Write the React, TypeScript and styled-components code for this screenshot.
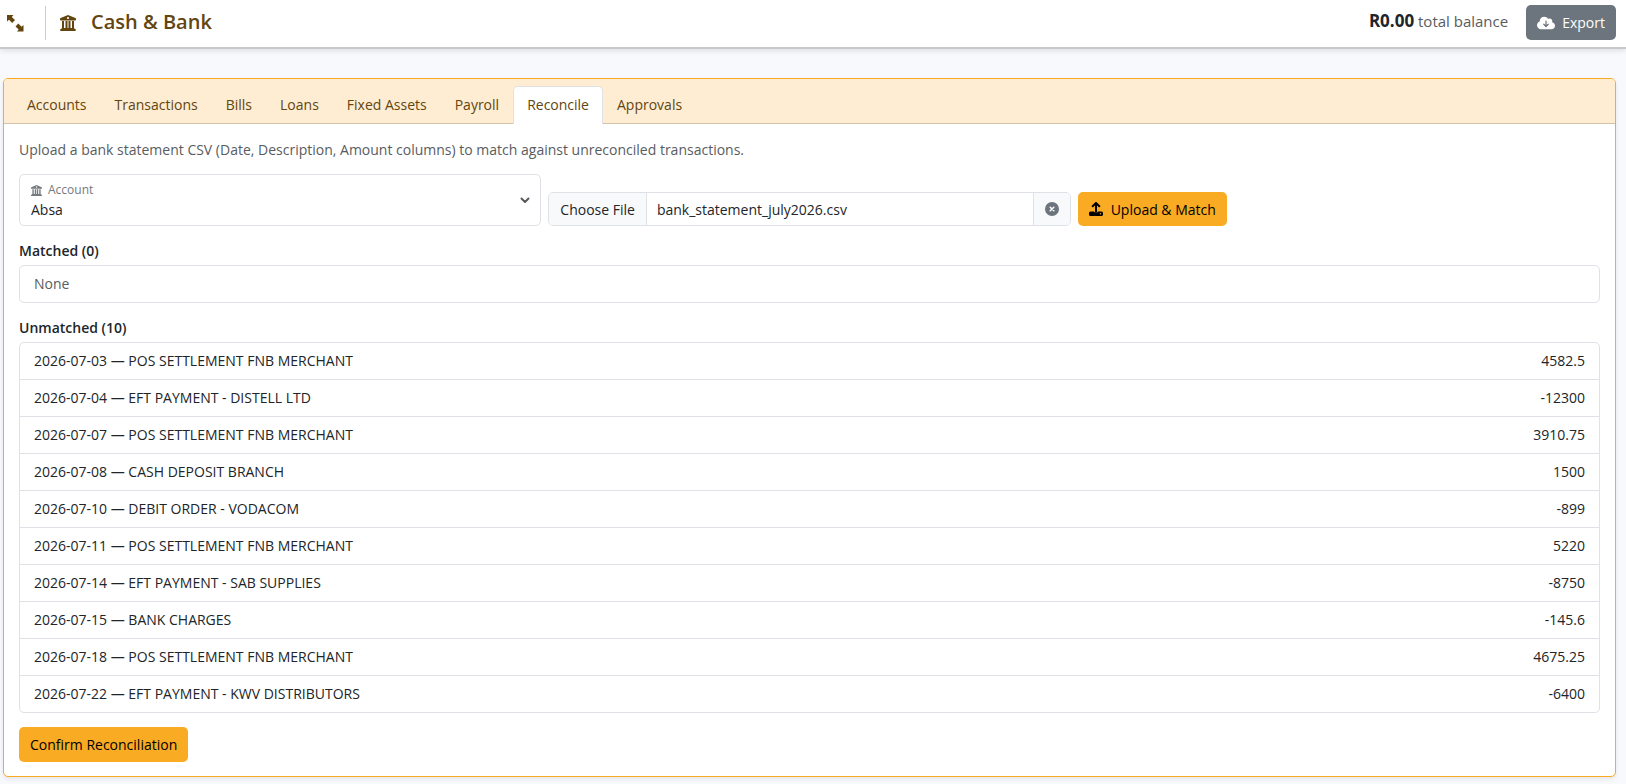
import React, { useState } from 'react';
import styled, { createGlobalStyle, css } from 'styled-components';

const Global = createGlobalStyle`
  *, *::before, *::after { box-sizing: border-box; }
  body {
    margin: 0;
    background: #f8f9fc;
    color: #212529;
    font: 400 14px/21px 'Segoe UI', 'Open Sans', 'Noto Sans', sans-serif;
  }
  button, select, input { font: inherit; color: inherit; }
`;

const TopBar = styled.header`
  display: flex;
  align-items: center;
  justify-content: space-between;
  height: 49px;
  padding: 0 10px 2px 6px;
  background: #fff;
  border-bottom: 2px solid #c8c8c8;
  box-shadow: 0 2px 5px rgba(0, 0, 0, 0.1);
`;

const TitleGroup = styled.div`
  display: flex;
  align-items: center;
  color: #63450f;
`;

const IconButton = styled.button`
  display: flex;
  padding: 0;
  border: 0;
  background: none;
  color: #63450f;
`;

const Divider = styled.span`
  width: 1px;
  height: 34px;
  margin: 0 14px 0 21px;
  background: #d6cab8;
`;

const Title = styled.h1`
  margin: 0 0 0 15px;
  padding-bottom: 2px;
  font-size: 20px;
  line-height: 28px;
  font-weight: 600;
`;

const BalanceGroup = styled.div`
  display: flex;
  align-items: center;
  gap: 18px;
`;

const Balance = styled.p`
  margin: 0;
  padding-bottom: 4px;
  font-size: 15px;
  color: #595c5f;
  strong { font-size: 17px; color: #212529; }
`;

const Button = styled.button<{ $tone: 'brand' | 'neutral' }>`
  display: inline-flex;
  align-items: center;
  height: 35px;
  padding: 0 11px;
  border: 0;
  border-radius: 5px;
  white-space: nowrap;
  cursor: pointer;
  ${p => p.$tone === 'brand'
    ? css`gap: 8px; background: #f9ab23; color: #000;`
    : css`gap: 7px; background: #6c757d; color: #fff;`}
`;

const Card = styled.main`
  margin: 29px 10px 7px 3px;
  border: 1px solid #f9ab23;
  border-radius: 5px;
  background: #fff;
  box-shadow: 0 2px 4px rgba(0, 0, 0, 0.08);
`;

const Tabs = styled.nav`
  display: flex;
  padding: 7px 9px 0;
  border-bottom: 1px solid #d2c2a8;
  border-radius: 4px 4px 0 0;
  background: #feedd3;
`;

const Tab = styled.a<{ $active: boolean }>`
  margin-bottom: -1px;
  padding: 7px 13px 8px;
  border: 1px solid transparent;
  border-bottom: 0;
  border-radius: 5px 5px 0 0;
  color: #63450f;
  line-height: 22px;
  text-decoration: none;
  ${p => p.$active && css`
    border-color: #dee2e6;
    background: #fff;
  `}
`;

const Body = styled.div`
  padding: 15px 15px 14px;
`;

const Hint = styled.p`
  margin: 0 0 14px;
  color: #595c5f;
`;

const UploadRow = styled.form`
  display: grid;
  grid-template-columns: repeat(3, 1fr);
  align-items: end;
  justify-items: start;
  gap: 7px;
  & > ${Button} { height: 34px; }
`;

const SelectField = styled.div`
  display: grid;
  position: relative;
  width: 100%;
  height: 52px;
`;

const SelectLabel = styled.label`
  position: absolute;
  top: 7px;
  left: 12px;
  display: flex;
  align-items: center;
  gap: 6px;
  font-size: 12px;
  line-height: 18px;
  color: #74797e;
  pointer-events: none;
`;

const Select = styled.select`
  width: 100%;
  padding: 18px 12px 0 11px;
  border: 1px solid #dee2e6;
  border-radius: 5px;
  background: #fff;
  appearance: none;
`;

const Chevron = styled.svg`
  position: absolute;
  right: 11px;
  top: 21px;
  pointer-events: none;
`;

const FileGroup = styled.div`
  display: flex;
  width: 100%;
  height: 34px;
  border: 1px solid #dee2e6;
  border-radius: 5px;
  overflow: hidden;
`;

const FilePick = styled.button`
  padding: 0 11px;
  border: 0;
  border-right: 1px solid #dee2e6;
  background: #f8f9fa;
  white-space: nowrap;
`;

const FileName = styled.input`
  flex: 1;
  min-width: 0;
  padding: 0 10px;
  border: 0;
  background: #fff;
`;

const FileClear = styled.button`
  display: flex;
  align-items: center;
  justify-content: center;
  width: 37px;
  padding: 0;
  border: 0;
  border-left: 1px solid #dee2e6;
  background: #f8f9fa;
  color: #6c757d;
`;

const SectionTitle = styled.h2`
  margin: 14px 0 4px;
  font-size: 14px;
  line-height: 21px;
  font-weight: 600;
`;

const List = styled.ul`
  margin: 0;
  padding: 0;
  border: 1px solid #dee2e6;
  border-radius: 5px;
  list-style: none;
`;

const Item = styled.li<{ $muted?: boolean }>`
  display: flex;
  justify-content: space-between;
  padding: 7px 14px 8px;
  color: ${p => (p.$muted ? '#595c5f' : 'inherit')};
  & + & { border-top: 1px solid #dee2e6; }
`;

const Footer = styled.div`
  display: flex;
  margin-top: 14px;
`;

const BankIcon = ({ size }: { size: number }) => (
  <svg width={size} height={size} viewBox="0 0 16 16" fill="currentColor" aria-hidden="true">
    <path fillRule="evenodd" d="M8 0 .6 3.100A1 1 0 0 0 0 4v.6a.8.800 0 0 0 .8.800h14.400a.8.800 0 0 0 .8-.8V4a1 1 0 0 0-.6-.9zM8 1.900a1.100 1.100 0 1 1 0 2.200 1.100 1.100 0 0 1 0-2.200z" />
    <path d="M2 6h2v7h1.500V6h2v7h1V6h2v7H12V6h2v7.200l1.600 1.100c.7.600.4 1.700-.5 1.700H.9c-.9 0-1.200-1.100-.5-1.700L2 13.200z" />
  </svg>
);

const ExpandIcon = () => (
  <svg width="18" height="18" viewBox="0 0 18 18" fill="currentColor" aria-hidden="true">
    <path d="M1 1h6.500L5.800 2.900 9 6.100 6.200 8.900 3 5.700 1 7.500z" />
    <path d="M17.500 17.500H11l1.700-1.900L9.500 12.400l2.800-2.800 3.200 3.200 2-1.800z" />
  </svg>
);

const CloudDownIcon = () => (
  <svg width="18" height="14" viewBox="0 32 640 448" aria-hidden="true">
    <path fill="currentColor" d="M144 480C64.500 480 0 415.500 0 336c0-62.800 40.200-116.200 96.200-135.900c-.1-2.700-.2-5.400-.2-8.100c0-88.400 71.600-160 160-160c59.300 0 111 32.200 138.700 80.200C409.900 102 428.300 96 448 96c53 0 96 43 96 96c0 12.200-2.300 23.800-6.400 34.600C596 238.400 640 290.100 640 352c0 70.700-57.300 128-128 128H144z" />
    <path fill="none" stroke="#6c757d" strokeWidth="44" strokeLinecap="round" strokeLinejoin="round" d="M320 190v180M240 300l80 80 80-80" />
  </svg>
);

const UploadIcon = () => (
  <svg width="14" height="14" viewBox="0 0 14 14" aria-hidden="true">
    <path d="M3.700 4.200 7 1l3.300 3.200M7 1.300V10" fill="none" stroke="currentColor" strokeWidth="2" strokeLinecap="round" strokeLinejoin="round" />
    <path d="M1.500 9.500h3.600a2 2 0 0 0 3.800 0h3.600A1.500 1.500 0 0 1 14 11v1.500a1.500 1.500 0 0 1-1.500 1.500h-11A1.500 1.500 0 0 1 0 12.500V11a1.500 1.500 0 0 1 1.500-1.500zM11.500 11a.7.700 0 1 0 0 1.400.7.700 0 0 0 0-1.400z" fill="currentColor" fillRule="evenodd" />
  </svg>
);

const ClearIcon = () => (
  <svg width="14" height="14" viewBox="0 0 14 14" aria-hidden="true">
    <circle cx="7" cy="7" r="7" fill="currentColor" />
    <path d="M5.200 5.200l3.600 3.600M8.800 5.200L5.200 8.800" stroke="#fff" strokeWidth="1.500" strokeLinecap="round" />
  </svg>
);

const tabs = ['Accounts', 'Transactions', 'Bills', 'Loans', 'Fixed Assets', 'Payroll', 'Reconcile', 'Approvals'];

const unmatched = [
  ['2026-07-03', 'POS SETTLEMENT FNB MERCHANT', '4582.5'],
  ['2026-07-04', 'EFT PAYMENT - DISTELL LTD', '-12300'],
  ['2026-07-07', 'POS SETTLEMENT FNB MERCHANT', '3910.75'],
  ['2026-07-08', 'CASH DEPOSIT BRANCH', '1500'],
  ['2026-07-10', 'DEBIT ORDER - VODACOM', '-899'],
  ['2026-07-11', 'POS SETTLEMENT FNB MERCHANT', '5220'],
  ['2026-07-14', 'EFT PAYMENT - SAB SUPPLIES', '-8750'],
  ['2026-07-15', 'BANK CHARGES', '-145.6'],
  ['2026-07-18', 'POS SETTLEMENT FNB MERCHANT', '4675.25'],
  ['2026-07-22', 'EFT PAYMENT - KWV DISTRIBUTORS', '-6400'],
];

export default function App() {
  const [active, setActive] = useState('Reconcile');
  const [file, setFile] = useState('bank_statement_july2026.csv');
  return (
    <>
      <Global />
      <TopBar>
        <TitleGroup>
          <IconButton type="button" aria-label="Expand"><ExpandIcon /></IconButton>
          <Divider />
          <BankIcon size={16} />
          <Title>Cash &amp; Bank</Title>
        </TitleGroup>
        <BalanceGroup>
          <Balance><strong>R0.00</strong> total balance</Balance>
          <Button type="button" $tone="neutral"><CloudDownIcon />Export</Button>
        </BalanceGroup>
      </TopBar>
      <Card>
        <Tabs>
          {tabs.map(t => (
            <Tab key={t} href="#" $active={t === active} onClick={() => setActive(t)}>{t}</Tab>
          ))}
        </Tabs>
        <Body>
          <Hint>Upload a bank statement CSV (Date, Description, Amount columns) to match against unreconciled transactions.</Hint>
          <UploadRow onSubmit={e => e.preventDefault()}>
            <SelectField>
              <Select id="account"><option>Absa</option></Select>
              <SelectLabel htmlFor="account"><BankIcon size={11} />Account</SelectLabel>
              <Chevron width="10" height="10" viewBox="0 0 10 10" fill="none" stroke="#555a5f" strokeWidth="2" strokeLinecap="round" strokeLinejoin="round" aria-hidden="true">
                <path d="M1.500 3.500 5 7l3.500-3.500" />
              </Chevron>
            </SelectField>
            <FileGroup>
              <FilePick type="button">Choose File</FilePick>
              <FileName aria-label="Statement file" readOnly value={file} />
              <FileClear type="button" aria-label="Clear file" onClick={() => setFile('')}><ClearIcon /></FileClear>
            </FileGroup>
            <Button type="submit" $tone="brand"><UploadIcon />Upload &amp; Match</Button>
          </UploadRow>
          <SectionTitle>Matched (0)</SectionTitle>
          <List><Item $muted>None</Item></List>
          <SectionTitle>Unmatched (10)</SectionTitle>
          <List>
            {unmatched.map(([date, text, amount]) => (
              <Item key={date}><span>{date} — {text}</span><span>{amount}</span></Item>
            ))}
          </List>
          <Footer><Button type="button" $tone="brand">Confirm Reconciliation</Button></Footer>
        </Body>
      </Card>
    </>
  );
}
